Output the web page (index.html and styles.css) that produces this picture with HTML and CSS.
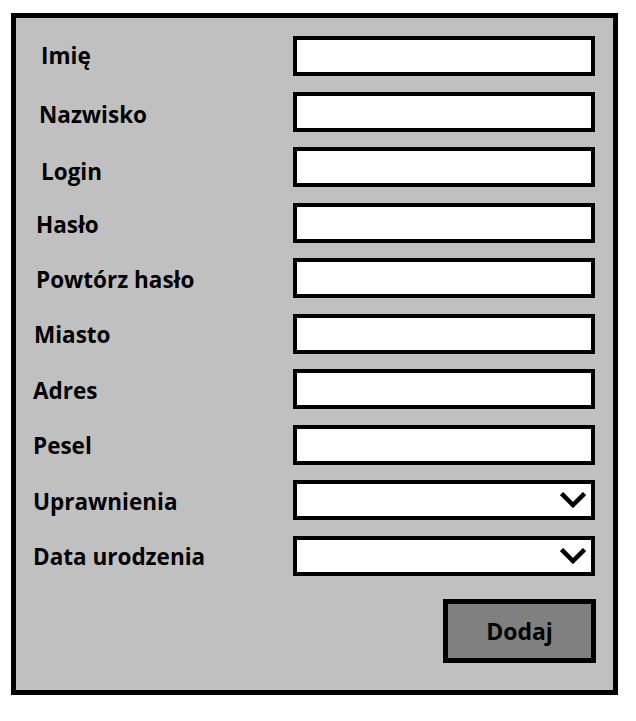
FILE: index.html
```html
<!DOCTYPE html>
<html lang="pl">
<head>
<meta charset="utf-8">
<title>Formularz</title>
<link rel="stylesheet" href="styles.css">
</head>
<body>
<form class="frame">
  <div class="rows">
    <label class="lbl ind-8 up-2">Imię</label><input class="field" type="text">
    <label class="lbl ind-6 down-2">Nazwisko</label><input class="field" type="text">
    <label class="lbl ind-8 down-3">Login</label><input class="field" type="text">
    <label class="lbl ind-3 down-1">Hasło</label><input class="field" type="text">
    <label class="lbl ind-3">Powtórz hasło</label><input class="field" type="text">
    <label class="lbl ind-1">Miasto</label><input class="field" type="text">
    <label class="lbl">Adres</label><input class="field" type="text">
    <label class="lbl">Pesel</label><input class="field" type="text">
    <label class="lbl">Uprawnienia</label>
    <div class="field select"><svg class="chev" width="26" height="16" viewBox="0 0 26 16"><polyline points="1.5,1.5 13,13 24.5,1.5" fill="none" stroke="#000" stroke-width="4.5" stroke-linejoin="miter"/></svg></div>
    <label class="lbl">Data urodzenia</label>
    <div class="field select"><svg class="chev" width="26" height="16" viewBox="0 0 26 16"><polyline points="1.5,1.5 13,13 24.5,1.5" fill="none" stroke="#000" stroke-width="4.5" stroke-linejoin="miter"/></svg></div>
  </div>
  <div class="actions">
    <button class="btn" type="button">Dodaj</button>
  </div>
</form>
</body>
</html>
```
FILE: styles.css
```css
html, body {
  margin: 0;
  padding: 0;
  background: #ffffff;
}
body {
  padding: 13px 0 0 11px;
  font-family: "Open Sans", "Noto Sans", "Liberation Sans", sans-serif;
}
.frame {
  box-sizing: border-box;
  width: 607px;
  height: 682px;
  border: 5px solid #000;
  background: #c0c0c0;
  padding: 18px 18px 0 17px;
  display: flex;
  flex-direction: column;
}
.rows {
  display: grid;
  grid-template-columns: 260px 302px;
  grid-auto-rows: 40px;
  row-gap: 15.56px;
  align-items: center;
}
.lbl {
  font-weight: 700;
  font-size: 22.5px;
  line-height: 30px;
  color: #000;
  padding-top: 3px;
  padding-left: 0;
  white-space: nowrap;
}
.ind-1 { padding-left: 1px; }
.ind-3 { padding-left: 3px; }
.ind-6 { padding-left: 6px; }
.ind-8 { padding-left: 8px; }
.up-2 { margin-bottom: 4px; }
.down-1 { margin-top: 2px; }
.down-2 { margin-top: 3px; }
.down-3 { margin-top: 6px; }
.field {
  box-sizing: border-box;
  height: 40px;
  width: 302px;
  margin: 0;
  border: 4px solid #000;
  border-radius: 0;
  background: #fff;
  outline: none;
  padding: 0;
}
.select {
  display: flex;
  align-items: center;
  justify-content: flex-end;
  padding-right: 5px;
}
.chev {
  display: block;
}
.actions {
  display: flex;
  justify-content: flex-end;
  margin-top: 23px;
}
.btn {
  box-sizing: border-box;
  width: 153px;
  height: 64px;
  margin-right: -1px;
  border: 5px solid #000;
  border-radius: 0;
  background: #808080;
  color: #000;
  font-family: "Open Sans", "Noto Sans", "Liberation Sans", sans-serif;
  font-weight: 700;
  font-size: 23px;
  padding: 0;
}
```
